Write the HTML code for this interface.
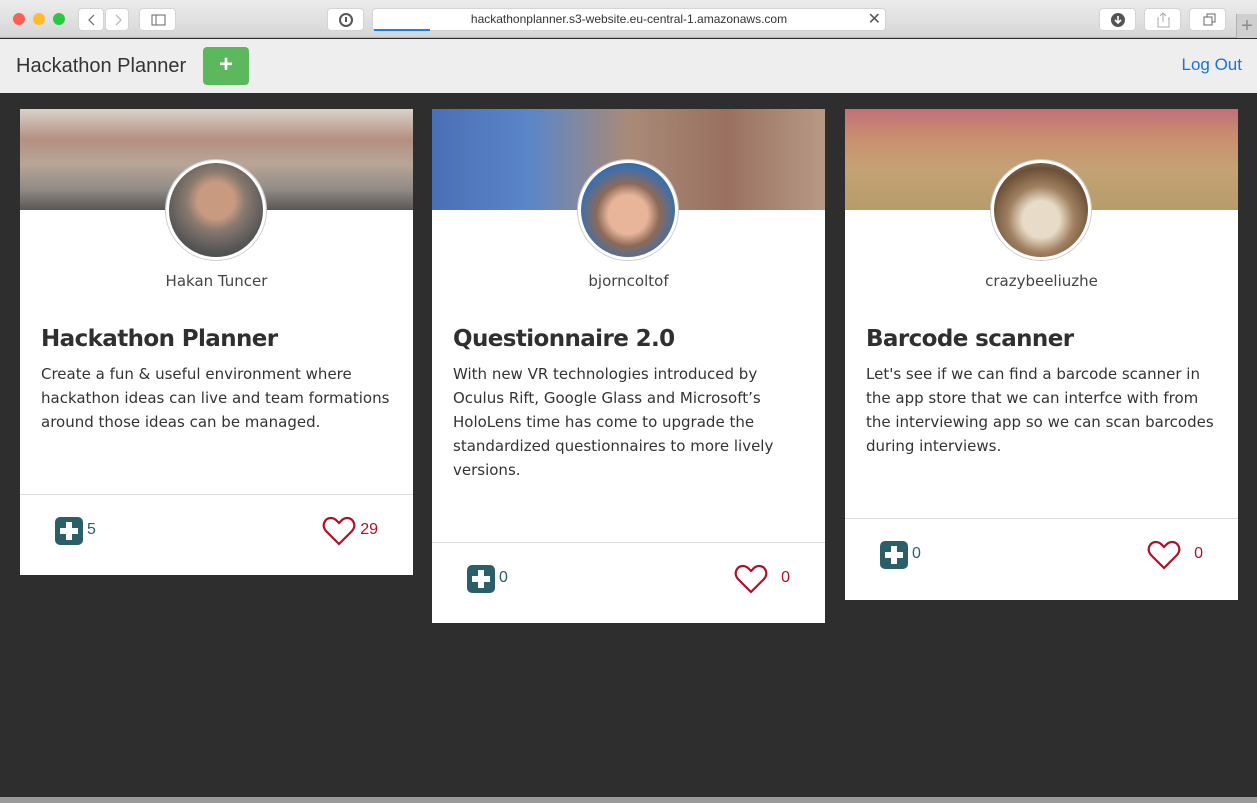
<!DOCTYPE html>
<html><head><meta charset="utf-8">
<style>
*{box-sizing:border-box;margin:0;padding:0}
body{width:1257px;height:803px;overflow:hidden;background:#2e2e2e;font-family:"Liberation Sans",sans-serif;position:relative}
.chrome{position:absolute;left:0;top:0;width:1257px;height:38px;background:linear-gradient(#ececec,#d6d6d6);border-bottom:1px solid #b4b4b4}
.dot{position:absolute;top:13px;width:12px;height:12px;border-radius:50%}
.btn{position:absolute;top:8px;height:23px;background:#fff;border-radius:4px;border:1px solid #d4d4d4}
.nav{position:absolute;left:0;top:39px;width:1257px;height:54px;background:#eeeeee}
.card{position:absolute;top:109px;width:393px;background:#fff;font-family:"DejaVu Sans","Liberation Sans",sans-serif}
.banner{height:101px}
.av{position:absolute;top:51px;left:146px;width:100px;height:100px;border-radius:50%;border:3px solid #fff;box-shadow:0 0 0 1px #ccc}
.name{position:absolute;top:163px;width:100%;text-align:center;font-size:15px;color:#444}
.title{position:absolute;top:217px;left:21px;font-size:23px;font-weight:bold;color:#2f2f2f;letter-spacing:-0.6px}
.desc{position:absolute;top:253px;left:21px;right:20px;font-size:15px;line-height:24px;color:#333}
.foot{position:absolute;left:0;right:0;border-top:1px solid #ddd;height:82px}
.plus{position:absolute;left:35px;top:22px;width:28px;height:28px;background:#2a5f6a;border-radius:5px}
.plus:before{content:"";position:absolute;left:5px;top:11px;width:18px;height:6px;background:#fff}
.plus:after{content:"";position:absolute;left:11px;top:5px;width:6px;height:18px;background:#fff}
.cnt{position:absolute;top:26px;left:67px;font-family:"Liberation Sans",sans-serif;font-size:16px;color:#2a5f6a}
.heart{position:absolute;top:21px;right:57px}
.hc{position:absolute;top:26px;right:35px;font-family:"Liberation Sans",sans-serif;font-size:16px;color:#b0102a}
</style></head><body>
<div class="chrome">
<div class="dot" style="left:13px;background:#fc5f57"></div>
<div class="dot" style="left:33px;background:#fdbc2e"></div>
<div class="dot" style="left:53px;background:#28c840"></div>
<div class="btn" style="left:78px;width:26px"><svg width="26" height="22"><path d="M15 6l-5 5 5 5" stroke="#777" fill="none" stroke-width="1.3"/></svg></div>
<div class="btn" style="left:105px;width:24px"><svg width="24" height="22"><path d="M10 6l5 5-5 5" stroke="#bbb" fill="none" stroke-width="1.3"/></svg></div>
<div class="btn" style="left:139px;width:37px"><svg width="37" height="22"><rect x="12" y="6" width="13" height="10" fill="none" stroke="#666"/><line x1="16" y1="6" x2="16" y2="16" stroke="#666"/></svg></div>
<div class="btn" style="left:327px;width:37px"><svg width="37" height="22"><circle cx="18" cy="11" r="6" fill="none" stroke="#555" stroke-width="2"/><line x1="18" y1="8" x2="18" y2="13" stroke="#555" stroke-width="2"/></svg></div>
<div class="btn" style="left:372px;width:514px;font-size:12px;color:#333;text-align:center;line-height:21px">hackathonplanner.s3-website.eu-central-1.amazonaws.com<div style="position:absolute;left:1px;bottom:-1px;width:56px;height:2px;background:#1a7ff0"></div><span style="position:absolute;right:4px;top:0;font-size:16px;color:#555">✕</span></div>
<div class="btn" style="left:1099px;width:37px"><svg width="37" height="22"><circle cx="18" cy="11" r="7" fill="#555"/><path d="M18 7v6M15 11l3 3 3-3" stroke="#fff" fill="none" stroke-width="1.6"/></svg></div>
<div class="btn" style="left:1144px;width:37px"><svg width="37" height="22"><path d="M14 9h-1v9h11V9h-1M18 4v9M15 7l3-3 3 3" stroke="#aaa" fill="none"/></svg></div>
<div class="btn" style="left:1189px;width:37px"><svg width="37" height="22"><rect x="14" y="8" width="8" height="8" fill="none" stroke="#666"/><path d="M17 8V5h8v8h-3" stroke="#666" fill="none"/></svg></div>
<div style="position:absolute;left:1236px;top:14px;width:21px;height:24px;background:#cfcfcf;border-left:1px solid #b0b0b0;color:#888;font-size:20px;text-align:center;line-height:24px">+</div>
</div>
<div class="nav">
<div style="position:absolute;left:16px;top:16px;font-size:20px;color:#333">Hackathon Planner</div>
<div style="position:absolute;left:203px;top:8px;width:46px;height:38px;background:#5cb85c;border-radius:4px;color:#fff;font-size:24px;font-weight:bold;text-align:center;line-height:36px">+</div>
<div style="position:absolute;right:15px;top:16px;font-size:17px;color:#1a73d9">Log Out</div>
</div>

<div class="card" style="left:20px;height:466px">
<div class="banner" style="background:linear-gradient(180deg,#d8d2cc 0%,#b59080 30%,#b8a596 55%,#8f8a86 80%,#5a5654 100%)"></div>
<div class="av" style="background:radial-gradient(circle at 50% 40%,#c89a80 0 25%,#8a7a70 40%,#555 70%,#3a3a3a)"></div>
<div class="name">Hakan Tuncer</div>
<div class="title">Hackathon Planner</div>
<div class="desc">Create a fun &amp; useful environment where hackathon ideas can live and team formations around those ideas can be managed.</div>
<div class="foot" style="top:385px"><div class="plus"></div><div class="cnt">5</div>
<svg class="heart" width="34" height="30" viewBox="0 0 34 30"><path d="M17 28L4 15C-1 9 3 2 9 2c4 0 6 3 8 5 2-2 4-5 8-5 6 0 10 7 5 13z" fill="none" stroke="#b0102a" stroke-width="2.2"/></svg><div class="hc">29</div></div>
</div>

<div class="card" style="left:432px;height:514px">
<div class="banner" style="background:linear-gradient(90deg,#4a6fb5 0%,#5b86c9 25%,#a98a78 50%,#9a7060 75%,#b79a86 100%)"></div>
<div class="av" style="background:radial-gradient(circle at 50% 55%,#e8b49a 0 28%,#8c6a58 45%,#3a6fb0 70%,#2a2a2a)"></div>
<div class="name">bjorncoltof</div>
<div class="title">Questionnaire 2.0</div>
<div class="desc">With new VR technologies introduced by Oculus Rift, Google Glass and Microsoft’s HoloLens time has come to upgrade the standardized questionnaires to more lively versions.</div>
<div class="foot" style="top:433px"><div class="plus"></div><div class="cnt">0</div>
<svg class="heart" width="34" height="30" viewBox="0 0 34 30"><path d="M17 28L4 15C-1 9 3 2 9 2c4 0 6 3 8 5 2-2 4-5 8-5 6 0 10 7 5 13z" fill="none" stroke="#b0102a" stroke-width="2.2"/></svg><div class="hc">0</div></div>
</div>

<div class="card" style="left:845px;height:491px">
<div class="banner" style="background:linear-gradient(180deg,#c2707a 0%,#c99070 30%,#c4a275 60%,#b79c6a 100%)"></div>
<div class="av" style="background:radial-gradient(circle at 50% 60%,#e8dcc8 0 25%,#a08060 45%,#6b5038 70%,#c0a080)"></div>
<div class="name">crazybeeliuzhe</div>
<div class="title">Barcode scanner</div>
<div class="desc">Let's see if we can find a barcode scanner in the app store that we can interfce with from the interviewing app so we can scan barcodes during interviews.</div>
<div class="foot" style="top:409px"><div class="plus"></div><div class="cnt">0</div>
<svg class="heart" width="34" height="30" viewBox="0 0 34 30"><path d="M17 28L4 15C-1 9 3 2 9 2c4 0 6 3 8 5 2-2 4-5 8-5 6 0 10 7 5 13z" fill="none" stroke="#b0102a" stroke-width="2.2"/></svg><div class="hc">0</div></div>
</div>
<div style="position:absolute;left:0;top:797px;width:1257px;height:6px;background:#9a9a9a"></div>
</body></html>
